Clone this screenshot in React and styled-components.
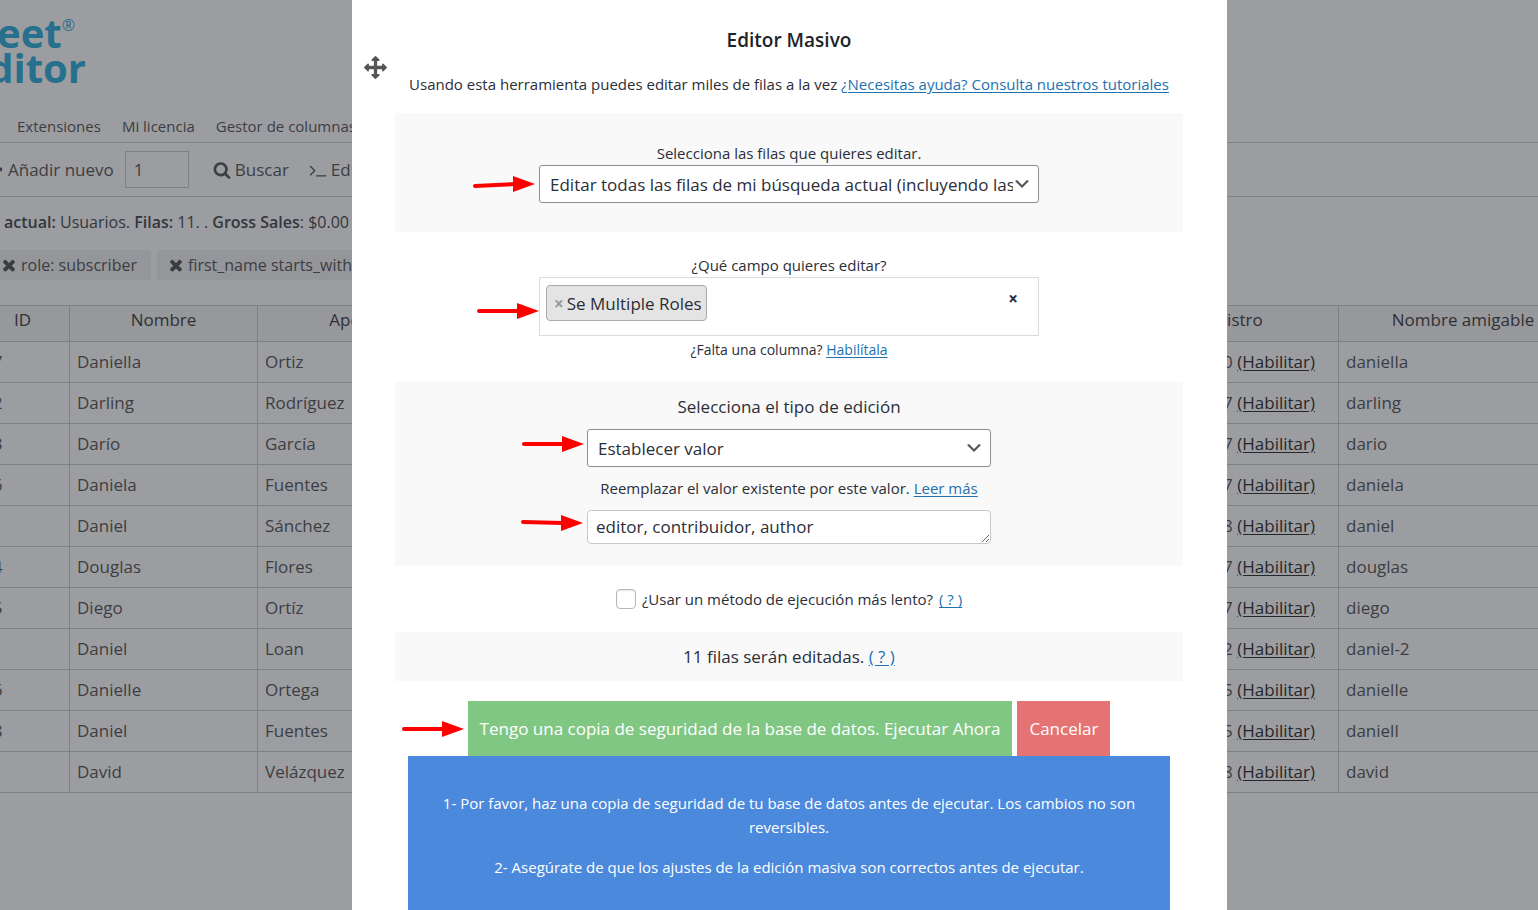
import React, { useState } from 'react';

import styled, { createGlobalStyle } from 'styled-components';

const people = [
    { id: '17', first: 'Daniella', last: 'Ortiz', date: '2021-04-10', slug: 'daniella' },
    { id: '12', first: 'Darling', last: 'Rodríguez', date: '2021-04-07', slug: 'darling' },
    { id: '13', first: 'Darío', last: 'García', date: '2021-04-07', slug: 'dario' },
    { id: '16', first: 'Daniela', last: 'Fuentes', date: '2021-04-07', slug: 'daniela' },
    { id: '9', first: 'Daniel', last: 'Sánchez', date: '2021-04-08', slug: 'daniel' },
    { id: '14', first: 'Douglas', last: 'Flores', date: '2021-04-07', slug: 'douglas' },
    { id: '15', first: 'Diego', last: 'Ortíz', date: '2021-04-07', slug: 'diego' },
    { id: '8', first: 'Daniel', last: 'Loan', date: '2021-04-02', slug: 'daniel-2' },
    { id: '26', first: 'Danielle', last: 'Ortega', date: '2021-04-05', slug: 'danielle' },
    { id: '18', first: 'Daniel', last: 'Fuentes', date: '2021-04-05', slug: 'daniell' },
    { id: '7', first: 'David', last: 'Velázquez', date: '2021-04-08', slug: 'david' },
];

const icons = {
    move: 'M1792 896q0 26-19 45l-256 256q-19 19-45 19t-45-19-19-45v-128h-384v384h128q26 0 45 19t19 45-19 45l-256 256q-19 19-45 19t-45-19l-256-256q-19-19-19-45t19-45 45-19h128v-384h-384v128q0 26-19 45t-45 19-45-19l-256-256q-19-19-19-45t19-45l256-256q19-19 45-19t45 19 19 45v128h384v-384h-128q-26 0-45-19t-19-45 19-45l256-256q19-19 45-19t45 19l256 256q19 19 19 45t-19 45-45 19h-128v384h384v-128q0-26 19-45t45-19 45 19l256 256q19 19 19 45z',
    search: 'M1216 832q0-185-131.5-316.5t-316.5-131.5-316.5 131.5-131.5 316.5 131.5 316.5 316.5 131.5 316.5-131.5 131.5-316.5zm512 832q0 52-38 90t-90 38q-54 0-90-38l-343-342q-179 124-399 124-143 0-273.5-55.5t-225-150-150-225-55.5-273.5 55.5-273.5 150-225 225-150 273.5-55.5 273.5 55.5 225 150 150 225 55.5 273.5q0 220-124 399l343 343q37 37 37 90z',
    terminal: 'M649 983l-466 466q-10 10-23 10t-23-10l-50-50q-10-10-10-23t10-23l393-393-393-393q-10-10-10-23t10-23l50-50q10-10 23-10t23 10l466 466q10 10 10 23t-10 23zm1079 457v64q0 14-9 23t-23 9h-960q-14 0-23-9t-9-23v-64q0-14 9-23t23-9h960q14 0 23 9t9 23z',
    plus: 'M1600 736v192q0 40-28 68t-68 28h-416v416q0 40-28 68t-68 28h-192q-40 0-68-28t-28-68v-416h-416q-40 0-68-28t-28-68v-192q0-40 28-68t68-28h416v-416q0-40 28-68t68-28h192q40 0 68 28t28 68v416h416q40 0 68 28t28 68z',
    times: 'M1490 1322q0 40-28 68l-136 136q-28 28-68 28t-68-28l-294-294-294 294q-28 28-68 28t-68-28l-136-136q-28-28-28-68t28-68l294-294-294-294q-28-28-28-68t28-68l136-136q28-28 68-28t68 28l294 294 294-294q28-28 68-28t68 28l136 136q28 28 28 68t-28 68l-294 294 294 294q28 28 28 68z',
};

function Icon({ name, size = 18 }) {
    return (
        <svg width={size} height={size} viewBox="0 0 1792 1792" fill="currentColor" aria-hidden="true">
            <path d={icons[name]} />
        </svg>
    )
}

// red pointer that sits to the left of a field
function Pointer({ tail = 8, gap, shift }) {
    return (
        <StyledPointer $gap={gap} $shift={shift} width="62" height="16" viewBox="0 0 62 16" aria-hidden="true">
            <path d={`M2 ${tail} L42 8`} stroke="#f00" strokeWidth="4" strokeLinecap="round" />
            <path d="M40 0 L62 8 L40 16 Z" fill="#f00" />
        </StyledPointer>
    )
}

function Sheet() {
    return (
        <StyledSheet>
            <Brand>
                <div>Sheet<sup>®</sup></div>
                <div>Editor</div>
            </Brand>
            <Menu>
                <a href="#extensiones">Extensiones</a>
                <a href="#licencia">Mi licencia</a>
                <a href="#columnas">Gestor de columnas</a>
            </Menu>
            <Toolbar>
                <ToolButton type="button"><Icon name="plus" />Añadir nuevo</ToolButton>
                <CountInput aria-label="Filas nuevas" defaultValue="1" />
                <ToolButton type="button"><Icon name="search" />Buscar</ToolButton>
                <ToolButton type="button"><Icon name="terminal" />Editor masivo</ToolButton>
            </Toolbar>
            <Summary>
                <b>actual:</b> Usuarios. <b>Filas:</b> 11. . <b>Gross Sales</b>: $0.00
            </Summary>
            <Filters>
                <Filter type="button"><Icon name="times" />role: subscriber</Filter>
                <Filter type="button"><Icon name="times" />first_name starts_with: D</Filter>
            </Filters>
            <Grid>
                <colgroup>
                    <col className="id" />
                    <col className="first" />
                    <col className="last" />
                    <col />
                    <col className="date" />
                    <col className="slug" />
                </colgroup>
                <thead>
                    <tr>
                        <th>ID</th>
                        <th>Nombre</th>
                        <th>Apellidos</th>
                        <th></th>
                        <th>Fecha de registro</th>
                        <th>Nombre amigable</th>
                    </tr>
                </thead>
                <tbody>
                    {people.map((person) => (
                        <tr key={person.slug}>
                            <td>{person.id}</td>
                            <td>{person.first}</td>
                            <td>{person.last}</td>
                            <td></td>
                            <td className="date">{person.date} <a href="#habilitar">(Habilitar)</a></td>
                            <td>{person.slug}</td>
                        </tr>
                    ))}
                </tbody>
            </Grid>
        </StyledSheet>
    )
}

function BulkEditor() {
    const [value, setValue] = useState('editor, contribuidor, author');
    const [slow, setSlow] = useState(false);

    return (
        <Overlay>
            <Modal role="dialog" aria-labelledby="bulk-title">
                <MoveHandle type="button" aria-label="Mover"><Icon name="move" size={23} /></MoveHandle>
                <Title id="bulk-title">Editor Masivo</Title>
                <Intro>
                    Usando esta herramienta puedes editar miles de filas a la vez <a href="#ayuda">¿Necesitas ayuda? Consulta nuestros tutoriales</a>
                </Intro>

                <Section $shaded $pad="29px 0">
                    <Label htmlFor="rows">Selecciona las filas que quieres editar.</Label>
                    <Field $width="500px">
                        <Pointer tail={10} gap="4px" shift="0px" />
                        <Select id="rows">
                            <option>Editar todas las filas de mi búsqueda actual (incluyendo las filas no visibles)</option>
                        </Select>
                    </Field>
                </Section>

                <Section $pad="22px 0 21px">
                    <Label htmlFor="column">¿Qué campo quieres editar?</Label>
                    <Field $width="500px">
                        <Pointer gap="0px" shift="4px" />
                        <TagBox>
                            <Tag><button type="button" aria-label="Quitar">×</button>Se Multiple Roles</Tag>
                            <input id="column" />
                            <Clear type="button" aria-label="Limpiar">×</Clear>
                        </TagBox>
                    </Field>
                    <Hint $small>¿Falta una columna? <a href="#habilitala">Habilítala</a></Hint>
                </Section>

                <Section $shaded $pad="12px 0 22px">
                    <Label $big htmlFor="kind">Selecciona el tipo de edición</Label>
                    <Field $width="404px">
                        <Pointer gap="3px" shift="-4px" />
                        <Select id="kind">
                            <option>Establecer valor</option>
                        </Select>
                    </Field>
                    <Hint $spaced>Reemplazar el valor existente por este valor. <a href="#leer">Leer más</a></Hint>
                    <Field $width="404px">
                        <Pointer tail={7} gap="4px" shift="-4px" />
                        <TextArea aria-label="Valor" rows="1" value={value} onChange={(e) => setValue(e.target.value)} />
                    </Field>
                </Section>

                <Section $pad="22px 0">
                    <CheckRow>
                        <input type="checkbox" id="slow" checked={slow} onChange={() => setSlow(!slow)} />
                        <label htmlFor="slow">¿Usar un método de ejecución más lento?</label>
                        <a href="#lento">( ? )</a>
                    </CheckRow>
                </Section>

                <Section $shaded $pad="12px 0">
                    <Count>11 filas serán editadas. <a href="#filas">( ? )</a></Count>
                </Section>

                <Actions>
                    <Field>
                        <Pointer gap="4px" shift="0px" />
                        <ActionButton $color="#81c784" type="button">Tengo una copia de seguridad de la base de datos. Ejecutar Ahora</ActionButton>
                    </Field>
                    <ActionButton $color="#e57373" type="button">Cancelar</ActionButton>
                </Actions>

                <Notice>
                    <p>1- Por favor, haz una copia de seguridad de tu base de datos antes de ejecutar. Los cambios no son reversibles.</p>
                    <p>2- Asegúrate de que los ajustes de la edición masiva son correctos antes de ejecutar.</p>
                </Notice>
            </Modal>
        </Overlay>
    )
}

function App() {
    return (
        <>
            <GlobalStyle />
            <Sheet />
            <BulkEditor />
        </>
    )
}

const GlobalStyle = createGlobalStyle`
    * {
        box-sizing: border-box;
    }

    body {
        margin: 0;
        overflow: hidden;
        background: #9c9da1;
        color: #3c3d42;
        font-family: "Open Sans", "Noto Sans", sans-serif;
        font-size: 17px;
    }

    button, input, select, textarea {
        font: inherit;
        color: inherit;
    }
`

const StyledSheet = styled.main`
    min-height: 100vh;
    overflow: hidden;
    svg {
        flex: none;
    }
`

const Brand = styled.div`
    width: 86px;
    height: 111px;
    padding-top: 15px;
    display: flex;
    flex-direction: column;
    align-items: flex-end;
    color: #266f8d;
    font-size: 40px;
    font-weight: 700;
    line-height: 35px;
    div:first-child {
        padding-right: 11px;
    }
    sup {
        font-size: 16px;
        font-weight: 400;
        line-height: 0;
        vertical-align: 17px;
    }
`

const Menu = styled.nav`
    height: 32px;
    padding-left: 17px;
    display: flex;
    gap: 21px;
    border-bottom: 1px solid #7f8083;
    a {
        color: inherit;
        font-size: 15px;
        line-height: 30px;
        text-decoration: none;
        white-space: nowrap;
    }
`

const Toolbar = styled.div`
    height: 54px;
    margin-left: -14px;
    display: flex;
    align-items: center;
    gap: 24px;
    border-bottom: 1px solid #7f8083;
`

const ToolButton = styled.button`
    display: flex;
    align-items: center;
    gap: 4px;
    padding: 0;
    border: none;
    background: none;
    white-space: nowrap;
    &:first-child {
        margin-right: -13px;
    }
    &:last-child {
        margin-left: -4px;
    }
`

const CountInput = styled.input`
    width: 64px;
    height: 37px;
    padding: 0 8px;
    border: 1px solid #7f8083;
    background: transparent;
`

const Summary = styled.p`
    margin: 0;
    padding: 13px 0 16px 4px;
    font-size: 16px;
    line-height: 24px;
    white-space: nowrap;
    color: #34363d;
    b {
        font-weight: 600;
    }
`

const Filters = styled.div`
    display: flex;
    gap: 6px;
    margin-bottom: 25px;
`

const Filter = styled.button`
    height: 30px;
    display: flex;
    align-items: center;
    gap: 3px;
    padding: 0 14px 0 10px;
    border: none;
    background: #959699;
    font-size: 16px;
    white-space: nowrap;
    &:first-child {
        padding-left: 0;
    }
`

const Grid = styled.table`
    width: calc(100% + 75px);
    margin-left: -25px;
    table-layout: fixed;
    border-collapse: collapse;
    .id {
        width: 94px;
    }
    .first {
        width: 188px;
    }
    .last {
        width: 216px;
    }
    col.date {
        width: 288px;
    }
    .slug {
        width: 249px;
    }
    th, td {
        border: 1px solid #7f8083;
        white-space: nowrap;
    }
    th {
        height: 36px;
        padding: 0 0 9px;
        background: #97989c;
        color: #2f3035;
        font-weight: 400;
    }
    td {
        height: 41px;
        padding: 0 7px 2px;
    }
    td.date {
        padding-right: 23px;
        text-align: right;
    }
    a {
        color: #26272b;
        text-underline-offset: 2px;
    }
`

const Overlay = styled.div`
    position: fixed;
    inset: 0;
    padding-left: 41px;
    display: flex;
    justify-content: center;
    align-items: flex-start;
    overflow: hidden;
`

const Modal = styled.div`
    position: relative;
    width: 100%;
    max-width: 875px;
    min-height: 100vh;
    padding: 28px 44px 60px 43px;
    background: #fff;
    color: #2b2e38;
    text-align: center;
    a {
        color: #2271b1;
        text-underline-offset: 2px;
    }
`

const MoveHandle = styled.button`
    position: absolute;
    top: 56px;
    left: 12px;
    display: flex;
    padding: 0;
    border: none;
    background: none;
    color: #555;
    cursor: move;
`

const Title = styled.h3`
    margin: 0;
    color: #1d2327;
    font-size: 19px;
    font-weight: 600;
    line-height: 24px;
`

const Intro = styled.p`
    margin: 20px -20px 17px;
    font-size: 15px;
    line-height: 24px;
`

const Section = styled.section`
    display: flex;
    flex-direction: column;
    align-items: center;
    padding: ${({ $pad }) => $pad};
    background: ${({ $shaded }) => ($shaded ? '#f9f9f9' : 'transparent')};
`

const Label = styled.label`
    font-size: ${({ $big }) => ($big ? '17px' : '15px')};
    line-height: ${({ $big }) => ($big ? '25px' : '23px')};
    margin-bottom: ${({ $big }) => ($big ? '10px' : '0')};
`

const Field = styled.div`
    position: relative;
    width: ${({ $width }) => $width || 'auto'};
    max-width: 100%;
`

const StyledPointer = styled.svg`
    position: absolute;
    right: calc(100% + ${({ $gap }) => $gap});
    top: calc(50% - 8px + ${({ $shift }) => $shift});
`

const Select = styled.select`
    display: block;
    width: 100%;
    height: 38px;
    padding: 1px 25px 0 10px;
    appearance: none;
    border: 1px solid #8c8f94;
    border-radius: 3px;
    background: #fff url('data:image/svg+xml;utf8,<svg xmlns="http://www.w3.org/2000/svg" viewBox="0 0 20 20"><path d="M5 6l5 5 5-5 2 1-7 7-7-7 2-1z" fill="%23555"/></svg>') no-repeat right 6px center / 20px 20px;
`

const TagBox = styled.div`
    height: 59px;
    display: flex;
    align-items: flex-start;
    padding: 7px 20px 0 6px;
    border: 1px solid #dcdcde;
    background: #fff;
    input {
        flex: 1;
        min-width: 0;
        height: 36px;
        border: none;
        outline: none;
    }
`

const Tag = styled.span`
    height: 36px;
    display: flex;
    align-items: center;
    gap: 3px;
    padding: 0 4px 0 7px;
    border: 1px solid #aaa;
    border-radius: 4px;
    background: #e4e4e4;
    button {
        padding: 0;
        border: none;
        background: none;
        color: #999;
        font-weight: 700;
    }
`

const Clear = styled.button`
    padding: 0;
    border: none;
    background: none;
    font-weight: 700;
    line-height: 28px;
`

const Hint = styled.p`
    margin: ${({ $spaced }) => ($spaced ? '10px 0 11px' : '3px 0 0')};
    font-size: ${({ $small }) => ($small ? '14px' : '15px')};
    line-height: 22px;
`

const TextArea = styled.textarea`
    display: block;
    width: 100%;
    height: 34px;
    padding: 3px 8px;
    border: 1px solid #c8c9cc;
    border-radius: 4px;
    background: #fff;
    line-height: 26px;
    overflow: hidden;
    resize: vertical;
`

const CheckRow = styled.div`
    display: flex;
    align-items: center;
    gap: 6px;
    height: 22px;
    font-size: 15px;
    input {
        width: 20px;
        height: 20px;
        margin: 0;
        appearance: none;
        border: 1px solid #b4b6ba;
        border-radius: 4px;
        background: #fff;
        box-shadow: inset 0 1px 2px rgba(0,0,0,0.1);
    }
`

const Count = styled.div`
    line-height: 25px;
`

const Actions = styled.div`
    display: flex;
    justify-content: center;
    gap: 5px;
    margin-top: 20px;
`

const ActionButton = styled.button`
    height: 55px;
    padding: 0 12px;
    border: none;
    background: ${({ $color }) => $color};
    color: #fff;
`

const Notice = styled.div`
    margin: 0 13px;
    padding: 35px 20px 60px;
    background: #4b89dc;
    color: #fff;
    font-size: 15px;
    font-weight: 500;
    line-height: 24px;
    p {
        margin: 0 0 16px;
    }
`

export default App;
